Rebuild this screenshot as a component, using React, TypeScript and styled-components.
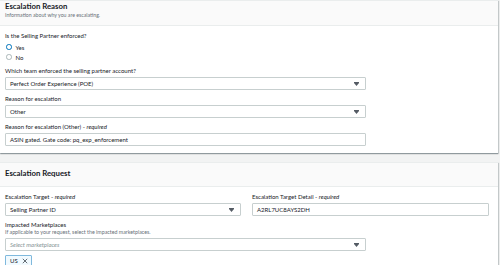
import styled, { createGlobalStyle } from "styled-components";

const GlobalStyle = createGlobalStyle`
  html, body {
    margin: 0;
    padding: 0;
    background: #f2f3f3;
  }
  body {
    font-family: Lato, "Liberation Sans", Arial, sans-serif;
    color: #16191f;
    overflow: hidden;
  }
`;

const Caret = () => (
  <svg width="5" height="4" viewBox="0 0 5 4">
    <rect x="0" y="0" width="5" height="1" fill="#545b64" />
    <path d="M0 1 L5 1 L2.5 4 Z" fill="#545b64" />
  </svg>
);

const Cross = () => (
  <svg width="6" height="6" viewBox="0 0 6 6">
    <path d="M0.8 0.8 L5.2 5.2 M5.2 0.8 L0.8 5.2" stroke="#545b64" strokeWidth="0.9" />
  </svg>
);

const App = () => {
  return (
    <>
      <GlobalStyle />
      <Page>
        <Card>
          <Header $sub>
            <Title>Escalation Reason</Title>
            <Subtitle>Information about why you are escalating.</Subtitle>
          </Header>
          <Body>
            <Stack>
              <Field>
                <Label>Is the Selling Partner enforced?</Label>
                <RadioGroup>
                  <RadioRow>
                    <Radio $checked />
                    <span>Yes</span>
                  </RadioRow>
                  <RadioRow>
                    <Radio />
                    <span>No</span>
                  </RadioRow>
                </RadioGroup>
              </Field>

              <Field>
                <Label>Which team enforced the selling partner account?</Label>
                <Select>
                  <span>Perfect Order Experience (POE)</span>
                  <Caret />
                </Select>
              </Field>

              <Field>
                <Label>Reason for escalation</Label>
                <Select>
                  <span>Other</span>
                  <Caret />
                </Select>
              </Field>

              <Field>
                <Label>
                  Reason for escalation (Other) - <em>required</em>
                </Label>
                <Input>ASIN gated. Gate code: pq_exp_enforcement</Input>
              </Field>
            </Stack>
          </Body>
        </Card>

        <Card>
          <Header>
            <Title>Escalation Request</Title>
          </Header>
          <Body>
            <Stack $wide>
              <TwoCols>
                <Field>
                  <Label>
                    Escalation Target - <em>required</em>
                  </Label>
                  <Select>
                    <span>Selling Partner ID</span>
                    <Caret />
                  </Select>
                </Field>
                <Field>
                  <Label>
                    Escalation Target Detail - <em>required</em>
                  </Label>
                  <Input>A2RL7UC8AYS2DH</Input>
                </Field>
              </TwoCols>

              <Field $narrow>
                <Label>Impacted Marketplaces</Label>
                <Hint>If applicable to your request, select the impacted marketplaces.</Hint>
                <Select>
                  <Placeholder>Select marketplaces</Placeholder>
                  <Caret />
                </Select>
                <Tokens>
                  <Token>
                    <span>US</span>
                    <Cross />
                  </Token>
                </Tokens>
              </Field>
            </Stack>
          </Body>
        </Card>
      </Page>
    </>
  );
};

export default App;

const Page = styled.div`
  display: flex;
  flex-direction: column;
  gap: 9px;
  padding-right: 2px;
`;

const Card = styled.div`
  background: #ffffff;
  border-top: 1px solid #eaeded;
  box-shadow: 0 1px 1px 0 rgba(0, 28, 36, 0.3), 1px 1px 1px 0 rgba(0, 28, 36, 0.15);
`;

const Header = styled.div<{ $sub?: boolean }>`
  background: #fafafa;
  border-bottom: 1px solid #eaeded;
  padding: ${(p) => (p.$sub ? "1px 8px 6px 5px" : "6px 8px 8px 5px")};
`;

const Title = styled.div`
  font-size: 7.8px;
  line-height: 9px;
  font-weight: 700;
`;

const Subtitle = styled.div`
  font-size: 5.2px;
  line-height: 8px;
  color: #687078;
`;

const Body = styled.div`
  padding: 6px 8px 7px 5px;
`;

const Stack = styled.div<{ $wide?: boolean }>`
  display: flex;
  flex-direction: column;
  gap: 5px;
  width: ${(p) => (p.$wide ? "100%" : "361px")};
`;

const TwoCols = styled.div`
  display: grid;
  grid-template-columns: 236px 237px;
  column-gap: 11px;
`;

const Field = styled.div<{ $narrow?: boolean }>`
  display: flex;
  flex-direction: column;
  width: ${(p) => (p.$narrow ? "361px" : "auto")};
`;

const Label = styled.div`
  font-size: 6px;
  line-height: 7px;
  margin-bottom: 3px;

  em {
    font-style: italic;
  }
`;

const Hint = styled.div`
  font-size: 5.3px;
  line-height: 6px;
  color: #687078;
  margin-top: -2px;
  margin-bottom: 3px;
`;

const RadioGroup = styled.div`
  display: flex;
  flex-direction: column;
`;

const RadioRow = styled.div`
  display: flex;
  align-items: center;
  gap: 4px;
  height: 10px;
  padding-left: 1px;
  font-size: 6px;
`;

const Radio = styled.span<{ $checked?: boolean }>`
  box-sizing: border-box;
  width: 5.5px;
  height: 5.5px;
  border-radius: 50%;
  background: #ffffff;
  border: ${(p) => (p.$checked ? "1.6px solid #0073bb" : "0.8px solid #aab7b8")};
`;

const controlBase = `
  box-sizing: border-box;
  height: 13px;
  border: 1px solid #c7cfcf;
  border-radius: 1px;
  background: #ffffff;
  padding: 0 6px 0 4px;
  font-size: 6px;
  display: flex;
  align-items: center;
`;

const Select = styled.div`
  ${controlBase}
  justify-content: space-between;
`;

const Input = styled.div`
  ${controlBase}
`;

const Placeholder = styled.span`
  color: #879596;
  font-style: italic;
`;

const Tokens = styled.div`
  display: flex;
  margin-top: 4px;
`;

const Token = styled.div`
  box-sizing: border-box;
  display: flex;
  align-items: center;
  gap: 4px;
  height: 11px;
  padding: 0 3px 0 4px;
  border: 1px solid #7fb9dd;
  border-radius: 1px;
  background: #f1faff;
  font-size: 6px;
`;
